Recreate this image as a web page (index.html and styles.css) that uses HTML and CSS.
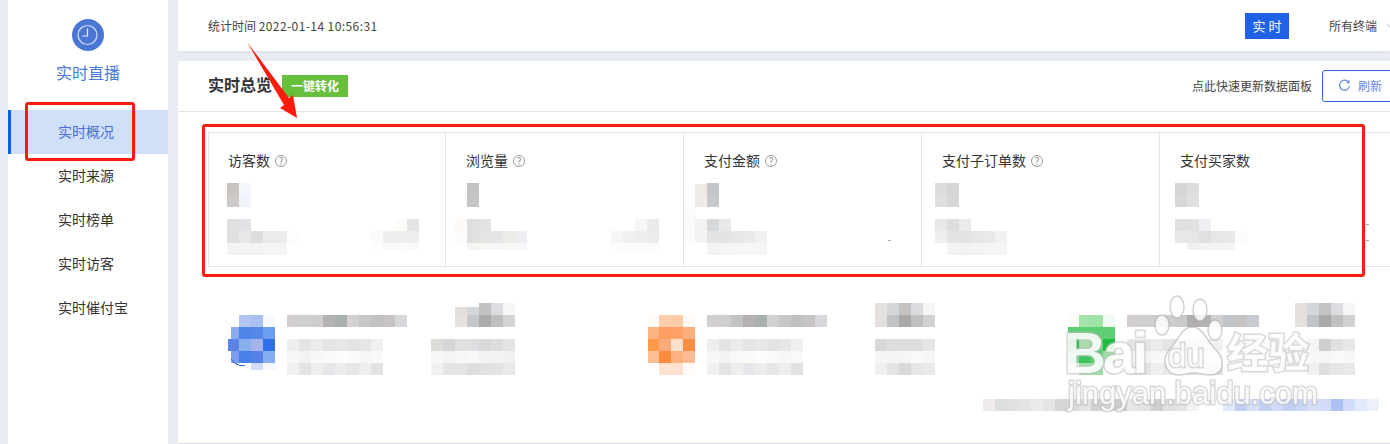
FILE: index.html
```html
<!DOCTYPE html>
<html lang="zh-CN">
<head>
  <meta charset="UTF-8" />
  <meta name="viewport" content="width=device-width, initial-scale=1.0" />
  <title>实时直播</title>
  <link rel="stylesheet" href="styles.css">
</head>
<body>
  <div class="app">
    <aside class="sidebar">
      <svg class="live-icon" width="32" height="32" viewBox="0 0 32 32">
        <circle cx="16" cy="16" r="16" fill="#4a76d6"/>
        <circle cx="15.5" cy="16" r="9.500" fill="none" stroke="#d3def7" stroke-width="1.200"/>
        <path d="M15.500 9.500v7.500h-5" fill="none" stroke="#eef2fc" stroke-width="1.200"/>
      </svg>
      <div class="live-title">实时直播</div>
      <nav class="side-nav">
        <a class="side-link active">实时概况</a>
        <a class="side-link">实时来源</a>
        <a class="side-link">实时榜单</a>
        <a class="side-link">实时访客</a>
        <a class="side-link">实时催付宝</a>
      </nav>
    </aside>

    <main class="main">
      <header class="top-bar">
        <div class="stat-time">统计时间 <span class="stat-date">2022-01-14 10:56:31</span></div>
        <div class="top-actions">
          <span class="realtime-btn">实时</span>
          <span class="terminal">所有终端</span>
          <svg class="chevron" width="9" height="6" viewBox="0 0 9 6">
            <path d="M.5.500l4 4 4-4" fill="none" stroke="#bbb" stroke-width="1"/>
          </svg>
        </div>
      </header>

      <section class="panel">
        <div class="panel-head">
          <h2>实时总览</h2>
          <span class="convert-tag">一键转化</span>
          <span class="refresh-tip">点此快速更新数据面板</span>
          <button class="refresh-btn">
            <svg width="13" height="13" viewBox="0 0 13 13">
              <path d="M10.800 3.500A5 5 0 1 0 11.500 7" fill="none" stroke="#5f86e6" stroke-width="1.200"/>
              <path d="M11.500 .8v3.400H8.100z" fill="#5f86e6"/>
            </svg>
            刷新
          </button>
        </div>

        <div class="metrics">
          <div class="metric">
            <div class="metric-label">访客数 <i class="help">?</i></div>
            <svg class="mosaic" width="236" height="84" viewBox="209 176 236 84">
              <rect x="227" y="183" fill="#c8c4c2"/><rect x="239" y="183" fill="#f5f9fd"/>
              <rect x="227" y="195" fill="#cdc9c7"/><rect x="239" y="195" fill="#eff5fa"/>
              <rect x="227" y="219" fill="#dedfde"/><rect x="239" y="219" fill="#e1e2e5"/><rect x="395" y="219" fill="#fdfbf8"/><rect x="407" y="219" fill="#e2e4e6"/>
              <rect x="227" y="231" fill="#e0dfdd"/><rect x="239" y="231" fill="#e8e8ea"/><rect x="251" y="231" fill="#dddedc"/><rect x="263" y="231" fill="#ebebeb"/><rect x="275" y="231" fill="#ebebeb"/><rect x="287" y="231" fill="#fcfdfd"/>
              <rect x="371" y="231" fill="#fcfaf8"/><rect x="383" y="231" fill="#eeeeed"/><rect x="395" y="231" fill="#eeeeed"/><rect x="407" y="231" fill="#ecedee"/>
              <rect x="227" y="243" fill="#f4f3f2"/><rect x="239" y="243" fill="#f4f4f4"/><rect x="251" y="243" fill="#f3f3f3"/><rect x="263" y="243" fill="#f5f5f5"/><rect x="275" y="243" fill="#f5f5f5"/>
              <rect x="371" y="243" class="low" fill="#fdfdfd"/><rect x="383" y="243" class="low" fill="#fafafa"/><rect x="395" y="243" class="low" fill="#fbfbfb"/><rect x="407" y="243" class="low" fill="#fafafa"/>
            </svg>
          </div>
          <div class="metric">
            <div class="metric-label">浏览量 <i class="help">?</i></div>
            <svg class="mosaic" width="237" height="84" viewBox="446 176 237 84">
              <rect x="467" y="183" fill="#c3c3c3"/><rect x="467" y="195" fill="#c5c5c5"/>
              <rect x="455" y="219" fill="#fdf9f7"/><rect x="467" y="219" fill="#dfdfe2"/><rect x="479" y="219" fill="#e2e2e2"/><rect x="635" y="219" fill="#f6f6f6"/><rect x="647" y="219" fill="#e9ebea"/>
              <rect x="455" y="231" fill="#fcfbfa"/><rect x="467" y="231" fill="#e0e0e0"/><rect x="479" y="231" fill="#e4e4e2"/><rect x="491" y="231" fill="#e3e5e5"/><rect x="503" y="231" fill="#ecebe8"/><rect x="515" y="231" fill="#ecedf1"/>
              <rect x="611" y="231" fill="#f6f6f6"/><rect x="623" y="231" fill="#f0f0f0"/><rect x="635" y="231" fill="#eeeeee"/><rect x="647" y="231" fill="#ececec"/>
              <rect x="467" y="243" class="low" fill="#f6f5f2"/><rect x="479" y="243" class="low" fill="#f6f6f3"/><rect x="491" y="243" class="low" fill="#f6f6f6"/><rect x="503" y="243" class="low" fill="#f7f7f5"/><rect x="515" y="243" class="low" fill="#f6f6f8"/>
              <rect x="611" y="243" class="low" fill="#fcfcfc"/><rect x="623" y="243" class="low" fill="#fbfbfb"/><rect x="635" y="243" class="low" fill="#fbfbfb"/><rect x="647" y="243" class="low" fill="#fbfbfb"/>
            </svg>
          </div>
          <div class="metric">
            <div class="metric-label">支付金额 <i class="help">?</i></div>
            <svg class="mosaic" width="237" height="84" viewBox="684 176 237 84">
              <rect x="695" y="184" fill="#eeebe5"/><rect x="707" y="183" fill="#c2c7ce"/>
              <rect x="695" y="195" fill="#efece7"/><rect x="707" y="195" fill="#c6c9ce"/>
              <rect x="684" y="207" fill="#fbfbfb"/><rect x="684" y="219" fill="#fbfbfb"/><rect x="684" y="231" fill="#fbfbfb"/>
              <rect x="695" y="219" fill="#f3f2f0"/><rect x="707" y="219" fill="#d6d9dc"/><rect x="719" y="219" fill="#e8e8e8"/>
              <rect x="695" y="231" fill="#f3f3f2"/><rect x="707" y="231" fill="#e3e5e5"/><rect x="719" y="231" fill="#e3e3e3"/><rect x="731" y="231" fill="#e6e7e7"/><rect x="743" y="231" fill="#eaeaea"/><rect x="755" y="231" fill="#f0f0f0"/>
              <rect x="707" y="243" fill="#f3f3f3"/><rect x="719" y="243" fill="#f5f5f5"/><rect x="731" y="243" fill="#f5f5f5"/><rect x="743" y="243" fill="#f6f6f6"/><rect x="755" y="243" fill="#f6f6f6"/>
              <rect x="888" y="240" class="tick" fill="#aaa"/>
            </svg>
          </div>
          <div class="metric">
            <div class="metric-label">支付子订单数 <i class="help">?</i></div>
            <svg class="mosaic" width="237" height="84" viewBox="922 176 237 84">
              <rect x="935" y="183" fill="#dcdcdc"/><rect x="947" y="183" fill="#d5d6d8"/>
              <rect x="935" y="195" fill="#e0dedf"/><rect x="947" y="195" fill="#d7d8da"/>
              <rect x="935" y="219" fill="#e8e8e8"/><rect x="947" y="219" fill="#dddddf"/><rect x="959" y="219" fill="#eaeaea"/>
              <rect x="935" y="231" fill="#eeeeee"/><rect x="947" y="231" fill="#e4e4e4"/><rect x="959" y="231" fill="#e2e2e2"/><rect x="971" y="231" fill="#e6e6e6"/><rect x="983" y="231" fill="#e9e9eb"/><rect x="995" y="231" fill="#f2f2f2"/>
              <rect x="947" y="243" fill="#f3f3f3"/><rect x="959" y="243" fill="#f2f2f2"/><rect x="971" y="243" fill="#f4f4f4"/><rect x="983" y="243" fill="#f5f5f5"/><rect x="995" y="243" fill="#f5f5f5"/>
            </svg>
          </div>
          <div class="metric">
            <div class="metric-label">支付买家数</div>
            <svg class="mosaic" width="237" height="84" viewBox="1160 176 237 84">
              <rect x="1175" y="183" fill="#d6d5d4"/><rect x="1187" y="183" fill="#dcdddf"/>
              <rect x="1175" y="195" fill="#d9d7d7"/><rect x="1187" y="195" fill="#dedfe1"/>
              <rect x="1175" y="219" fill="#dfdfe0"/><rect x="1187" y="219" fill="#e0e1e3"/><rect x="1199" y="219" fill="#eef0f3"/>
              <rect x="1175" y="231" fill="#e7e7e7"/><rect x="1187" y="231" fill="#e6e6e6"/><rect x="1199" y="231" fill="#dfe0df"/><rect x="1211" y="231" fill="#e6e6e6"/><rect x="1223" y="231" fill="#e8e8e8"/><rect x="1235" y="231" fill="#fafbfb"/>
              <rect x="1187" y="243" class="low" fill="#f0f0f0"/><rect x="1199" y="243" class="low" fill="#f3f3f3"/><rect x="1211" y="243" class="low" fill="#f4f4f4"/><rect x="1223" y="243" class="low" fill="#f4f4f4"/>
              <rect x="1366" y="224" class="tick" fill="#aaa"/><rect x="1366" y="240" class="tick" fill="#aaa"/>
            </svg>
          </div>
        </div>

        <div class="summary-row">
          <div class="summary-item">
            <svg class="mosaic" width="290" height="72" viewBox="228 303 290 72">
              <rect x="239" y="315" fill="#b3c6f3"/><rect x="251" y="315" fill="#a8c0f2"/><rect x="263" y="315" fill="#f7fbff"/>
              <rect x="231" y="327" class="thin" fill="#8caaeb"/><rect x="239" y="327" fill="#5085ea"/><rect x="251" y="327" fill="#5587e9"/><rect x="263" y="327" fill="#6b9df0"/>
              <rect x="228" y="339" class="wide" fill="#5b83e6"/><rect x="239" y="339" fill="#88b0ef"/><rect x="251" y="339" fill="#a5b5ea"/><rect x="263" y="339" fill="#2e70ea"/>
              <rect x="231" y="351" class="thin" fill="#7d9ded"/><rect x="239" y="351" fill="#487fe9"/><rect x="251" y="351" fill="#5580e8"/><rect x="263" y="351" fill="#86adf0"/>
              <rect x="251" y="363" class="low" fill="#d0dcf8"/><rect x="263" y="363" class="low" fill="#f5f8fe"/>
              <path d="M231 359q5 7 14 7" fill="none" stroke="#3a6fe0" stroke-width="1"/>

              <rect x="287" y="315" fill="#d3cfce"/><rect x="299" y="315" fill="#cfcfd0"/><rect x="311" y="315" fill="#cfcdce"/><rect x="323" y="315" fill="#b5b1b4"/><rect x="335" y="315" fill="#a9b0b0"/><rect x="347" y="315" fill="#d2d0d2"/><rect x="359" y="315" fill="#c7c7c5"/><rect x="371" y="315" fill="#c0c2c1"/><rect x="383" y="315" fill="#c6c3c2"/><rect x="395" y="315" fill="#d7d8dc"/>
              <rect x="287" y="339" fill="#eeeeed"/><rect x="299" y="339" fill="#e4e4e6"/><rect x="311" y="339" fill="#ecebe9"/><rect x="323" y="339" fill="#e4e4e7"/><rect x="335" y="339" fill="#e8e7e5"/><rect x="347" y="339" fill="#e3e3e3"/><rect x="359" y="339" fill="#e5e6e5"/><rect x="371" y="339" fill="#eff0f1"/>
              <rect x="287" y="351" fill="#f7f7f6"/><rect x="299" y="351" fill="#f3f3f3"/><rect x="311" y="351" fill="#f8f8f7"/><rect x="323" y="351" fill="#fafaf8"/><rect x="335" y="351" fill="#fcfcfa"/><rect x="347" y="351" fill="#fafaf9"/><rect x="359" y="351" fill="#f7f7f6"/><rect x="371" y="351" fill="#f9f9f8"/>
              <rect x="287" y="363" fill="#f0f0ef"/><rect x="299" y="363" fill="#e3e3e3"/><rect x="311" y="363" fill="#efeded"/><rect x="323" y="363" fill="#e6e7ea"/><rect x="335" y="363" fill="#eeecea"/><rect x="347" y="363" fill="#e5e6e8"/><rect x="359" y="363" fill="#edeeed"/><rect x="371" y="363" fill="#e2e2e2"/>

              <rect x="455" y="307" class="mid" fill="#e1dedb"/><rect x="467" y="307" class="mid" fill="#d2d7db"/><rect x="479" y="303" fill="#c2c2c2"/><rect x="491" y="303" fill="#dcdde0"/><rect x="503" y="303" fill="#f6f6f6"/>
              <rect x="455" y="315" fill="#e7e0dd"/><rect x="467" y="315" fill="#c3c8cc"/><rect x="479" y="315" fill="#acacac"/><rect x="491" y="315" fill="#bfbfbf"/><rect x="503" y="315" fill="#d3d4d6"/>
              <rect x="431" y="339" fill="#dbdbd8"/><rect x="443" y="339" fill="#d3d5d7"/><rect x="455" y="339" fill="#e1e0df"/><rect x="467" y="339" fill="#dddee2"/><rect x="479" y="339" fill="#d8d8d8"/><rect x="491" y="339" fill="#dfdcde"/><rect x="503" y="339" fill="#e3e5e4"/>
              <rect x="431" y="351" fill="#f7f7f6"/><rect x="443" y="351" fill="#f3f5f5"/><rect x="455" y="351" fill="#f5f6f6"/><rect x="467" y="351" fill="#f7f8f8"/><rect x="479" y="351" fill="#f3f3f2"/><rect x="491" y="351" fill="#f3f3f2"/><rect x="503" y="351" fill="#f0f0f0"/>
              <rect x="431" y="363" fill="#f1f1f0"/><rect x="443" y="363" fill="#e2e4e4"/><rect x="455" y="363" fill="#e3e4e4"/><rect x="467" y="363" fill="#dcdddd"/><rect x="479" y="363" fill="#e1e1e1"/><rect x="491" y="363" fill="#e2e2e2"/><rect x="503" y="363" fill="#e7e8e8"/>
            </svg>
          </div>
          <div class="summary-item">
            <svg class="mosaic" width="290" height="72" viewBox="648 303 290 72">
              <rect x="647" y="315" fill="#fefbf8"/><rect x="659" y="315" fill="#fdcea9"/><rect x="671" y="315" fill="#fdcba6"/><rect x="683" y="315" fill="#fffaf6"/>
              <rect x="647" y="327" fill="#feb482"/><rect x="659" y="327" fill="#fd9f63"/><rect x="671" y="327" fill="#fea267"/><rect x="683" y="327" fill="#fead7c"/>
              <rect x="647" y="339" fill="#ff9a4a"/><rect x="659" y="339" fill="#feab7c"/><rect x="671" y="339" fill="#fedfc7"/><rect x="683" y="339" fill="#ff8c43"/>
              <rect x="647" y="351" fill="#febf95"/><rect x="659" y="351" fill="#ff8a3c"/><rect x="671" y="351" fill="#feb27d"/><rect x="683" y="351" fill="#feb995"/>
              <rect x="659" y="363" fill="#fee2d0"/><rect x="671" y="363" fill="#fee1d0"/><rect x="683" y="363" fill="#fffbf8"/>

              <rect x="707" y="315" fill="#d3cfce"/><rect x="719" y="315" fill="#cfcfd0"/><rect x="731" y="315" fill="#c4c2c4"/><rect x="743" y="315" fill="#b5b1b4"/><rect x="755" y="315" fill="#a9b0b0"/><rect x="767" y="315" fill="#d2d0d2"/><rect x="779" y="315" fill="#c7c7c5"/><rect x="791" y="315" fill="#c0c2c1"/><rect x="803" y="315" fill="#c6c3c2"/><rect x="815" y="315" fill="#d7d8dc"/>
              <rect x="707" y="339" fill="#eeeeed"/><rect x="719" y="339" fill="#e4e4e6"/><rect x="731" y="339" fill="#ecebe9"/><rect x="743" y="339" fill="#e4e4e7"/><rect x="755" y="339" fill="#e8e7e5"/><rect x="767" y="339" fill="#e3e3e3"/><rect x="779" y="339" fill="#e5e6e5"/><rect x="791" y="339" fill="#eff0f1"/>
              <rect x="707" y="351" fill="#f7f7f6"/><rect x="719" y="351" fill="#f3f3f3"/><rect x="731" y="351" fill="#f8f8f7"/><rect x="743" y="351" fill="#fafaf8"/><rect x="755" y="351" fill="#fcfcfa"/><rect x="767" y="351" fill="#fafaf9"/><rect x="779" y="351" fill="#f7f7f6"/><rect x="791" y="351" fill="#f9f9f8"/>
              <rect x="707" y="363" fill="#f0f0ef"/><rect x="719" y="363" fill="#e3e3e3"/><rect x="731" y="363" fill="#efeded"/><rect x="743" y="363" fill="#e6e7ea"/><rect x="755" y="363" fill="#eeecea"/><rect x="767" y="363" fill="#e5e6e8"/><rect x="779" y="363" fill="#edeeed"/><rect x="791" y="363" fill="#e2e2e2"/>

              <rect x="875" y="303" fill="#e4e0de"/><rect x="887" y="303" fill="#d0d6d9"/><rect x="899" y="303" fill="#c3c3c3"/><rect x="911" y="303" fill="#dcdde0"/><rect x="923" y="303" fill="#f6f6f6"/>
              <rect x="875" y="315" fill="#e6dfdd"/><rect x="887" y="315" fill="#bfc4c8"/><rect x="899" y="315" fill="#a9a9a9"/><rect x="911" y="315" fill="#c0c0c0"/><rect x="923" y="315" fill="#cfd1d3"/>
              <rect x="875" y="339" fill="#d8d7d7"/><rect x="887" y="339" fill="#dededf"/><rect x="899" y="339" fill="#dcdcde"/><rect x="911" y="339" fill="#dddee0"/><rect x="923" y="339" fill="#e5e6e8"/>
              <rect x="875" y="351" fill="#f5f5f5"/><rect x="887" y="351" fill="#f5f5f6"/><rect x="899" y="351" fill="#f6f6f7"/><rect x="911" y="351" fill="#f9f9f9"/><rect x="923" y="351" fill="#f7f7f7"/>
              <rect x="875" y="363" fill="#f1f0f0"/><rect x="887" y="363" fill="#e3e4e4"/><rect x="899" y="363" fill="#d8d8d8"/><rect x="911" y="363" fill="#e6e6e6"/><rect x="923" y="363" fill="#eaeaea"/>
            </svg>
          </div>
          <div class="summary-item">
            <svg class="mosaic" width="290" height="72" viewBox="1068 303 290 72">
              <rect x="1067" y="315" fill="#fafdfa"/><rect x="1079" y="315" fill="#a4e4a9"/><rect x="1091" y="315" fill="#9fe4a7"/><rect x="1103" y="315" fill="#f0faf2"/>
              <rect x="1067" y="327" fill="#5dcf72"/><rect x="1079" y="327" fill="#5ccf70"/><rect x="1091" y="327" fill="#5ece74"/><rect x="1103" y="327" fill="#5dcc74"/>
              <rect x="1067" y="339" fill="#17b83b"/><rect x="1079" y="339" fill="#a8dca8"/><rect x="1091" y="339" fill="#6dd082"/><rect x="1103" y="339" fill="#1ebc3c"/>
              <rect x="1067" y="351" fill="#7ed892"/><rect x="1079" y="351" fill="#3fc35f"/><rect x="1091" y="351" fill="#5dcc74"/><rect x="1103" y="351" fill="#9fdfa8"/>
              <rect x="1079" y="363" fill="#a0e0a8"/><rect x="1091" y="363" fill="#9fdfa8"/>

              <rect x="1127" y="315" fill="#d3cfce"/><rect x="1139" y="315" fill="#cfcfd0"/><rect x="1151" y="315" fill="#cfcdce"/><rect x="1163" y="315" fill="#cdcdcd"/><rect x="1175" y="315" fill="#c9c9c9"/><rect x="1187" y="315" fill="#b1adb0"/><rect x="1199" y="315" fill="#b5b3b4"/><rect x="1211" y="315" fill="#d2d0d2"/><rect x="1223" y="315" fill="#c0c4c8"/><rect x="1235" y="315" fill="#c6c3c2"/><rect x="1247" y="315" fill="#c8ccd2"/>
              <rect x="1127" y="339" fill="#e4e4e6"/><rect x="1139" y="339" fill="#e4e4e6"/><rect x="1151" y="339" fill="#ecebe9"/><rect x="1163" y="339" fill="#e4e4e7"/><rect x="1175" y="339" fill="#e8e7e5"/><rect x="1187" y="339" fill="#e3e3e3"/><rect x="1199" y="339" fill="#e5e6e5"/><rect x="1211" y="339" fill="#eff0f1"/>
              <rect x="1127" y="351" fill="#f7f7f6"/><rect x="1139" y="351" fill="#f3f3f3"/><rect x="1151" y="351" fill="#f8f8f7"/><rect x="1163" y="351" fill="#fafaf8"/><rect x="1175" y="351" fill="#fcfcfa"/><rect x="1187" y="351" fill="#fafaf9"/><rect x="1199" y="351" fill="#f7f7f6"/><rect x="1211" y="351" fill="#f9f9f8"/>
              <rect x="1127" y="363" fill="#f0f0ef"/><rect x="1139" y="363" fill="#e3e3e3"/><rect x="1151" y="363" fill="#efeded"/><rect x="1163" y="363" fill="#e6e7ea"/><rect x="1175" y="363" fill="#eeecea"/><rect x="1187" y="363" fill="#e5e6e8"/><rect x="1199" y="363" fill="#edeeed"/><rect x="1211" y="363" fill="#e2e2e2"/>

              <rect x="1295" y="303" fill="#e4e0de"/><rect x="1307" y="303" fill="#d0d6d9"/><rect x="1319" y="303" fill="#c3c3c3"/><rect x="1331" y="303" fill="#dcdde0"/><rect x="1343" y="303" fill="#f6f6f6"/>
              <rect x="1295" y="315" fill="#e6dfdd"/><rect x="1307" y="315" fill="#bfc4c8"/><rect x="1319" y="315" fill="#a9a9a9"/><rect x="1331" y="315" fill="#c0c0c0"/><rect x="1343" y="315" fill="#cfd1d3"/>
              <rect x="1307" y="339" fill="#f5f5f5"/><rect x="1319" y="339" fill="#cfcfcf"/><rect x="1331" y="339" fill="#e0e0e2"/><rect x="1343" y="339" fill="#e8e8ea"/>
              <rect x="1307" y="351" fill="#f7f7f7"/><rect x="1319" y="351" fill="#f6f6f7"/><rect x="1331" y="351" fill="#f9f9f9"/><rect x="1343" y="351" fill="#f7f7f7"/>
              <rect x="1307" y="363" fill="#f0f0f0"/><rect x="1319" y="363" fill="#e0e0e0"/><rect x="1331" y="363" fill="#e6e6e6"/><rect x="1343" y="363" fill="#e8e8e8"/>
            </svg>
          </div>
        </div>

        <svg class="mosaic bottom-band" width="396" height="12" viewBox="983 399 396 12">
          <rect x="983" y="399" fill="#eee9ea"/><rect x="995" y="399" fill="#dcdddd"/><rect x="1007" y="399" fill="#dfe0e0"/><rect x="1019" y="399" fill="#e4e4e4"/><rect x="1031" y="399" fill="#eaeaea"/><rect x="1043" y="399" fill="#e4e4e4"/><rect x="1055" y="399" fill="#d6d6d6"/><rect x="1067" y="399" fill="#dcdcdc"/><rect x="1079" y="399" fill="#e2e2e2"/><rect x="1091" y="399" fill="#d2d2d2"/><rect x="1103" y="399" fill="#d8d8d8"/><rect x="1115" y="399" fill="#cdcdcd"/><rect x="1127" y="399" fill="#e6e6e6"/><rect x="1139" y="399" fill="#e2e2e2"/><rect x="1151" y="399" fill="#cfcfcf"/><rect x="1163" y="399" fill="#dedede"/><rect x="1175" y="399" fill="#e4e4e4"/><rect x="1187" y="399" fill="#f2f2f2"/>
          <rect x="1223" y="399" fill="#e2e9fa"/><rect x="1235" y="399" fill="#c2d0f4"/><rect x="1247" y="399" fill="#d5dff8"/><rect x="1259" y="399" fill="#c2d0f4"/><rect x="1271" y="399" fill="#d0dbf7"/><rect x="1283" y="399" fill="#c0cef4"/><rect x="1295" y="399" fill="#c8d5f5"/><rect x="1307" y="399" fill="#d5dff8"/><rect x="1319" y="399" fill="#d0dbf7"/><rect x="1331" y="399" fill="#aec2f2"/><rect x="1343" y="399" fill="#d0dcf8"/><rect x="1355" y="399" fill="#e2e9fb"/><rect x="1367" y="399" fill="#ebf0fc"/>
        </svg>
      </section>
    </main>
  </div>

  <!-- annotations drawn over the screenshot -->
  <div class="mark mark-nav"></div>
  <div class="mark mark-metrics"></div>
  <svg class="mark-arrow" width="1390" height="444" viewBox="0 0 1390 444">
    <polygon points="247,42 289,98 293,95 297,118 280,108 284,105" fill="#fe1a0c"/>
  </svg>

  <div class="watermark">
    <svg class="paw" width="76" height="85" viewBox="0 0 76 85">
      <ellipse cx="23" cy="13" rx="7" ry="11"/>
      <ellipse cx="46" cy="16" rx="7" ry="11"/>
      <ellipse cx="8" cy="31" rx="7" ry="10"/>
      <ellipse cx="61" cy="36" rx="7" ry="10"/>
      <path d="M38 33C28 33 25 45 16 55 6 65 12 81 24 81 30 81 34 79 40 79 46 79 50 81 56 81 70 81 72 66 62 56 52 46 49 33 38 33z"/>
    </svg>
    <span class="wm-bai">Bai</span>
    <span class="wm-du">du</span>
    <span class="wm-jy">经验</span>
    <span class="wm-url">jingyan.baidu.com</span>
  </div>
</body>
</html>
```

FILE: styles.css
```css
* {
  margin: 0;
  padding: 0;
  box-sizing: border-box;
}

html,
body {
  width: 1390px;
  height: 444px;
  overflow: hidden;
}

body {
  font-family: "Noto Sans CJK SC", "Liberation Sans", sans-serif;
  background-color: #e9ecf2;
  color: #333;
  position: relative;
}

.app {
  display: flex;
  height: 444px;
  padding-left: 8px;
}

/* sidebar */
.sidebar {
  width: 160px;
  flex: none;
  background-color: #ffffff;
  padding-top: 19px;
  margin-right: 10px;
}

.live-icon {
  display: block;
  margin: 0 auto;
}

.live-title {
  margin-top: 11px;
  margin-bottom: 28px;
  line-height: 20px;
  font-size: 16px;
  text-align: center;
  color: #4a78d8;
}

.side-link {
  display: block;
  height: 44px;
  line-height: 42px;
  padding-left: 50px;
  font-size: 14px;
  color: #333;
}

.side-link.active {
  background-color: #cfe0f8;
  border-left: 3px solid #0a60f0;
  padding-left: 47px;
  color: #4a6ee0;
}

/* main column */
.main {
  flex: 1;
  min-width: 0;
  overflow: hidden;
}

.top-bar {
  height: 51px;
  background-color: #ffffff;
  display: flex;
  justify-content: space-between;
  align-items: center;
  padding-left: 30px;
  margin-bottom: 10px;
  box-shadow: 0 1px 3px rgba(0, 0, 0, 0.06);
}

.stat-time {
  font-size: 12px;
  color: #444;
}

.stat-date {
  letter-spacing: 0.42px;
}

.top-actions {
  display: flex;
  align-items: center;
  margin-right: -5px;
}

.realtime-btn {
  width: 44px;
  height: 26px;
  line-height: 26px;
  text-align: center;
  text-indent: 3px;
  font-size: 13px;
  letter-spacing: 3px;
  color: #ffffff;
  background-color: #2062e6;
}

.terminal {
  margin-left: 40px;
  font-size: 12px;
  color: #444;
}

.chevron {
  margin-left: 9px;
}

.panel {
  height: 383px;
  background-color: #ffffff;
  border-bottom: 1px solid #d8d8e0;
  overflow: hidden;
}

.panel-head {
  height: 51px;
  display: flex;
  align-items: center;
  padding: 0 0 1px 30px;
  border-bottom: 1px solid #e4e4e4;
}

.panel-head h2 {
  margin-top: -3px;
  font-size: 16px;
  font-weight: 700;
  color: #333;
}

.convert-tag {
  margin-left: 10px;
  width: 66px;
  height: 22px;
  line-height: 22px;
  text-align: center;
  font-size: 12px;
  font-weight: 700;
  color: #ffffff;
  background-color: #67bf3b;
}

.refresh-tip {
  margin-left: auto;
  font-size: 12px;
  color: #444;
}

.refresh-btn {
  flex: none;
  display: flex;
  align-items: center;
  gap: 7px;
  width: 76px;
  height: 32px;
  margin-left: 10px;
  margin-right: -8px;
  padding-left: 15px;
  font-family: inherit;
  font-size: 12px;
  color: #5f86e6;
  background-color: #ffffff;
  border: 1px solid #2f6ae0;
  border-radius: 3px;
}

/* metric cards */
.metrics {
  display: grid;
  grid-template-columns: 237px repeat(4, 238px);
  width: 1190px;
  height: 135px;
  margin: 20px 0 0 30px;
  border: 1px solid #e4e4e4;
  border-right: none;
}

.metric {
  border-right: 1px solid #e4e4e4;
}

.metric-label {
  display: flex;
  align-items: center;
  gap: 5px;
  height: 20px;
  margin-top: 17px;
  padding-left: 20px;
  font-size: 14px;
  color: #333;
}

.metric:first-child .metric-label {
  padding-left: 19px;
}

.help {
  width: 12px;
  height: 12px;
  margin-top: 1px;
  line-height: 10px;
  text-align: center;
  font-size: 10px;
  font-style: normal;
  color: #888;
  border: 1px solid #999;
  border-radius: 50%;
}

/* pixelated blocks */
.mosaic {
  display: block;
  shape-rendering: crispEdges;
}

.metric .mosaic {
  margin-top: 6px;
}

.mosaic rect {
  width: 12px;
  height: 12px;
}

.mosaic rect.low {
  height: 7px;
}

.mosaic rect.mid {
  height: 8px;
}

.mosaic rect.thin {
  width: 8px;
}

.mosaic rect.wide {
  width: 11px;
}

.mosaic rect.tick {
  width: 3px;
  height: 1px;
}

.summary-row {
  display: flex;
  margin: 36px 0 0 50px;
}

.summary-item {
  flex: none;
  width: 420px;
}

.bottom-band {
  margin: 24px 0 0 805px;
}

/* red annotations */
.mark {
  position: absolute;
  border: 3px solid #fe1a0c;
  border-radius: 3px;
}

.mark-nav {
  left: 25px;
  top: 102px;
  width: 110px;
  height: 59px;
}

.mark-metrics {
  left: 202px;
  top: 124px;
  width: 1163px;
  height: 153px;
}

.mark-arrow {
  position: absolute;
  left: 0;
  top: 0;
}

/* baidu watermark */
.watermark {
  position: absolute;
  left: 1066px;
  top: 294px;
  width: 250px;
  height: 122px;
  font-family: "Liberation Sans", sans-serif;
  color: rgba(255, 255, 255, 0.88);
  filter: blur(0.4px);
}

.watermark span {
  position: absolute;
  line-height: 1;
  paint-order: stroke fill;
  -webkit-text-stroke: 3px rgba(185, 185, 185, 0.55);
}

.paw {
  position: absolute;
  left: 88px;
  top: 0;
}

.paw ellipse,
.paw path {
  fill: rgba(255, 255, 255, 0.82);
  stroke: rgba(170, 170, 170, 0.55);
  stroke-width: 1.500;
}

.wm-bai {
  left: -2px;
  top: 30px;
  font-size: 58px;
  font-weight: 700;
  letter-spacing: -3px;
}

.wm-du {
  left: 102px;
  top: 45px;
  font-size: 33px;
}

.wm-jy {
  left: 161px;
  top: 36px;
  font-family: "Noto Sans CJK SC", sans-serif;
  font-size: 41px;
  font-weight: 700;
}

.wm-url {
  left: 2px;
  top: 84px;
  font-size: 31px;
}
```
